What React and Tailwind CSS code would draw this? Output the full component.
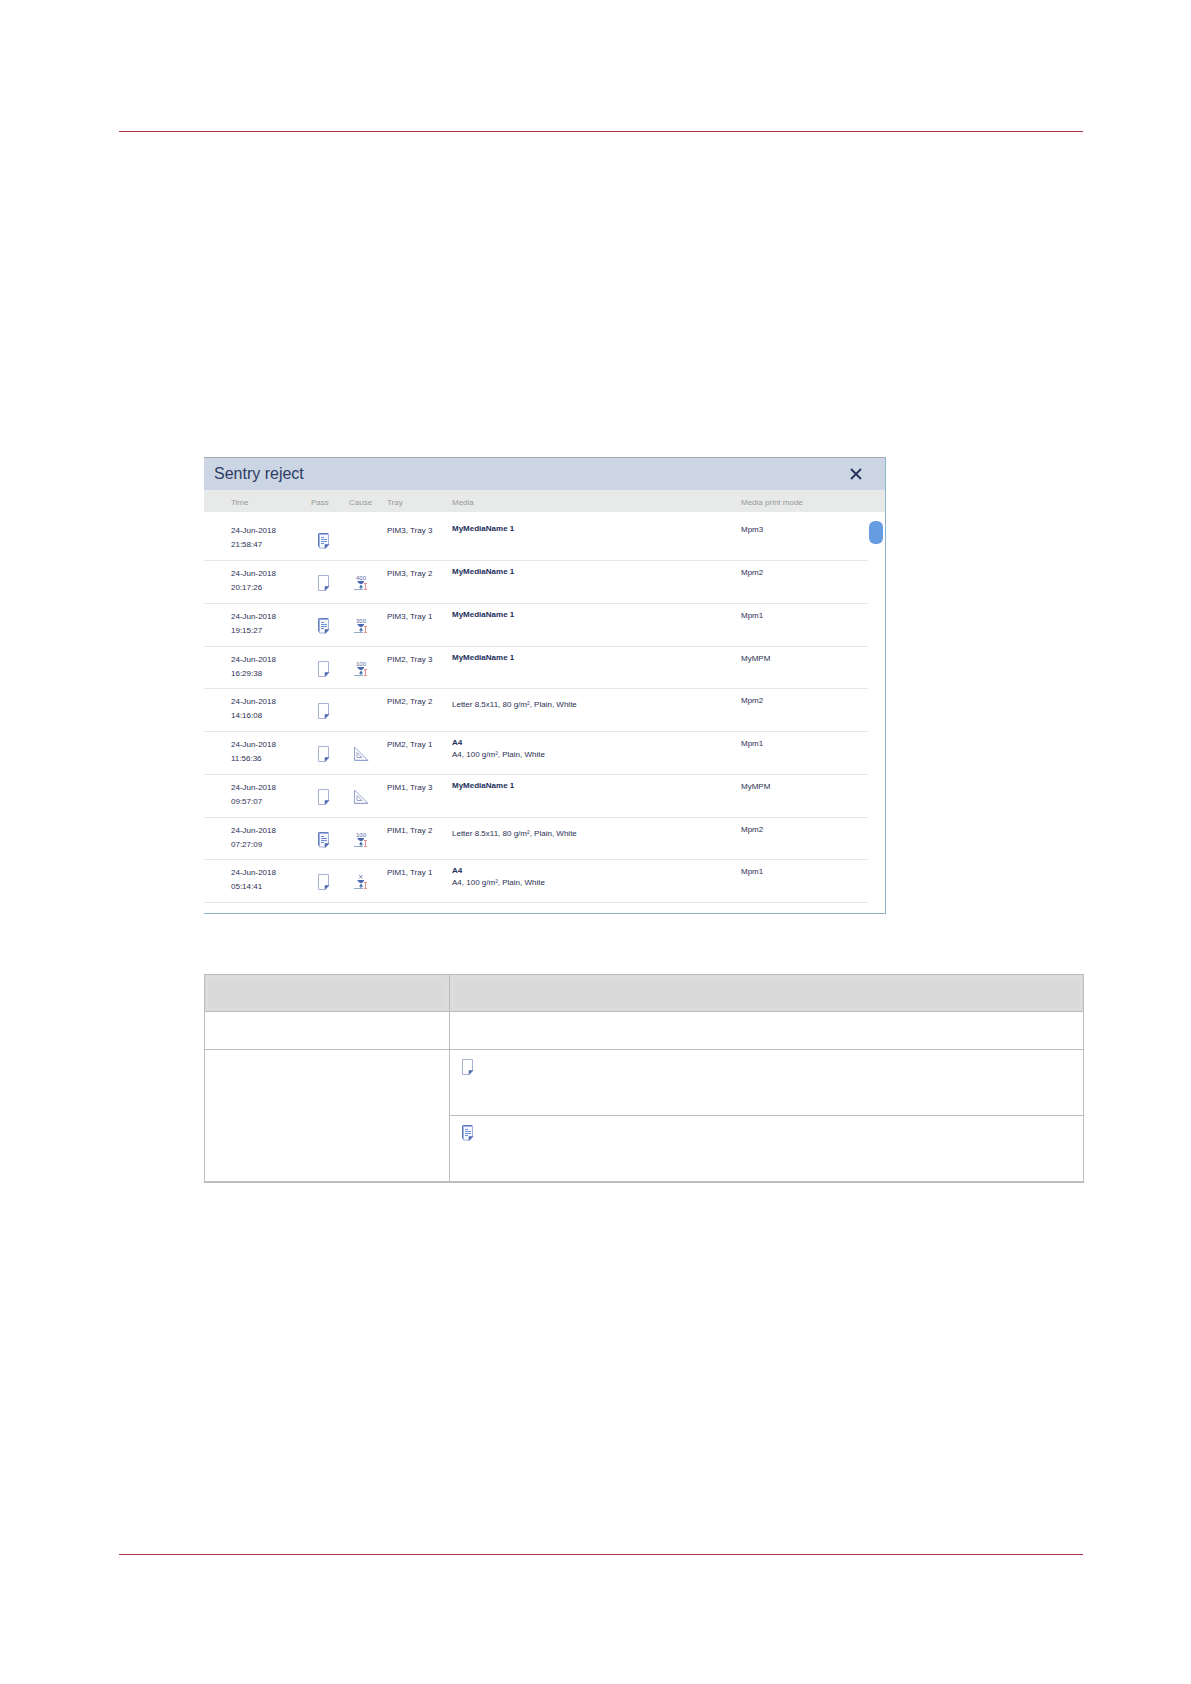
import React from "react";

function PageIcon({ lined = false }) {
  return (
    <svg viewBox="0 0 12 16" width="12" height="16" className="block" aria-hidden="true">
      {lined ? (
        <>
          <path d="M1.5 1.5H10.5V11.5L7.5 15H1.5Z" fill="#f6f8fe" stroke="#a3b2dc" />
          <path d="M0.5 13.5V1Q0.5 0.5 1 0.5H10.5" fill="none" stroke="#5f7bbd" />
          <path d="M3 4.5H6M3 6.5H9M3 8.5H9M3 10.5H6" stroke="#7391d6" />
        </>
      ) : (
        <path d="M0.5 0.5H10.5V11.5L7 15.5H0.5Z" fill="#fff" stroke="#a9b2d2" />
      )}
      <path d="M7 15.5V11.5H11Z" fill="#4c69b0" stroke="#4c69b0" strokeWidth="0.5" />
    </svg>
  );
}

function ThicknessIcon({ label }) {
  return (
    <svg viewBox="0 0 14 16" width="14" height="16" className="block overflow-visible" aria-hidden="true">
      {label ? (
        <text x="7" y="5" textAnchor="middle" fontSize="6" fill="#5568a8" fontFamily="Liberation Sans, sans-serif">
          {label}
        </text>
      ) : (
        <path d="M5 1L8.5 4.5M8.5 1L5 4.5" stroke="#5568a8" strokeWidth="0.8" />
      )}
      <path d="M3.5 6H10V7L8 9H6L3.5 7Z" fill="#4a67b4" />
      <path d="M7 9.5L9 12.5H7.5V14H6.5V12.5H5Z" fill="#3c6aa8" />
      <path d="M0 14.5H9" stroke="#94a9c9" />
      <path d="M10 8.5H13M11.5 8.5V14.5M10 14.5H13" stroke="#ec8f8f" fill="none" />
    </svg>
  );
}

function TriangleIcon() {
  return (
    <svg viewBox="0 0 15 16" width="15" height="16" className="block" aria-hidden="true">
      <path d="M0.5 1V14.5H14Z" fill="none" stroke="#94a3cf" />
      <path d="M3 6.5V11.5H8Z" fill="none" stroke="#94a3cf" />
      <path d="M1 14H14" stroke="#94a3cf" strokeDasharray="1 1" />
    </svg>
  );
}

const rows = [
  { time: "21:58:47", lined: true, tray: "PIM3, Tray 3", name: "MyMediaName 1", mode: "Mpm3" },
  { time: "20:17:26", cause: "thickness", label: "400", tray: "PIM3, Tray 2", name: "MyMediaName 1", mode: "Mpm2" },
  { time: "19:15:27", lined: true, cause: "thickness", label: "300", tray: "PIM3, Tray 1", name: "MyMediaName 1", mode: "Mpm1" },
  { time: "16:29:38", cause: "thickness", label: "100", tray: "PIM2, Tray 3", name: "MyMediaName 1", mode: "MyMPM", short: true },
  { time: "14:16:08", tray: "PIM2, Tray 2", detail: "Letter 8.5x11, 80 g/m², Plain, White", mode: "Mpm2" },
  { time: "11:56:36", cause: "size", tray: "PIM2, Tray 1", name: "A4", detail: "A4, 100 g/m², Plain, White", mode: "Mpm1" },
  { time: "09:57:07", cause: "size", tray: "PIM1, Tray 3", name: "MyMediaName 1", mode: "MyMPM" },
  { time: "07:27:09", lined: true, cause: "thickness", label: "100", tray: "PIM1, Tray 2", detail: "Letter 8.5x11, 80 g/m², Plain, White", mode: "Mpm2", short: true },
  { time: "05:14:41", cause: "thickness", tray: "PIM1, Tray 1", name: "A4", detail: "A4, 100 g/m², Plain, White", mode: "Mpm1" },
];

function RejectRow({ row, first }) {
  const height = first ? "h-[49px]" : row.short ? "h-[42px]" : "h-[43px]";
  const top = first ? "pt-3" : "pt-[6px]";
  const modeTop = first ? "pt-[11px]" : "pt-[5px]";
  const mediaTop = first ? "pt-[11px]" : row.name ? "pt-[5px]" : "pt-[10px]";
  const iconTop = first ? "pt-[21px]" : "pt-[14px]";
  const line = "border-b border-[#e6e6e8] p-0 align-top";
  return (
    <tr className={height}>
      <td className={`${line} ${top} pl-[27px]`}>
        24-Jun-2018
        <br />
        {row.time}
      </td>
      <td className={`${line} ${iconTop} pl-[7px]`}>
        <PageIcon lined={row.lined} />
      </td>
      <td className={`${line} ${iconTop} pl-[5px]`}>
        {row.cause === "size" && <TriangleIcon />}
        {row.cause === "thickness" && <ThicknessIcon label={row.label} />}
      </td>
      <td className={`${line} ${top}`}>{row.tray}</td>
      <td className={`${line} ${mediaTop} leading-3`}>
        {row.name && <div className="font-bold text-[#222e5a]">{row.name}</div>}
        {row.detail && <div>{row.detail}</div>}
      </td>
      <td className={`${line} ${modeTop}`}>{row.mode}</td>
      {first && (
        <td rowSpan={rows.length} className="p-0 pt-[9px] pl-px align-top">
          <div className="h-[23px] w-[14px] rounded-[6px] bg-[#669ce2]" />
        </td>
      )}
    </tr>
  );
}

function SentryRejectDialog() {
  return (
    <section aria-label="Sentry reject" className="max-w-[682px] border-t border-r border-b border-[#8fb3c8] border-t-[#a4aab2] pb-[10px]">
      <header className="flex h-8 items-center justify-between bg-[#ccd5e3] pr-[22px] pl-[10px]">
        <h1 className="text-base text-[#2c3c63]">Sentry reject</h1>
        <button type="button" aria-label="Close" className="text-[#27305c]">
          <svg viewBox="0 0 12 12" width="14" height="12" className="block">
            <path d="M1 1L11 11M11 1L1 11" stroke="currentColor" strokeWidth="1.8" fill="none" />
          </svg>
        </button>
      </header>
      <table className="w-full table-fixed border-separate border-spacing-0 text-left text-[8px] leading-[14px] text-[#2c3052]">
        <colgroup>
          <col className="w-[107px]" />
          <col className="w-[38px]" />
          <col className="w-[38px]" />
          <col className="w-[65px]" />
          <col />
          <col className="w-[127px]" />
          <col className="w-[17px]" />
        </colgroup>
        <thead>
          <tr className="h-[22px] bg-[#e8eae9] text-[#98999b]">
            <th className="p-0 pt-[3px] pl-[27px] font-normal">Time</th>
            <th className="p-0 pt-[3px] font-normal">Pass</th>
            <th className="p-0 pt-[3px] font-normal">Cause</th>
            <th className="p-0 pt-[3px] font-normal">Tray</th>
            <th className="p-0 pt-[3px] font-normal">Media</th>
            <th className="p-0 pt-[3px] font-normal">Media print mode</th>
            <td className="p-0" />
          </tr>
        </thead>
        <tbody>
          {rows.map((row, i) => (
            <RejectRow key={row.time} row={row} first={i === 0} />
          ))}
        </tbody>
      </table>
    </section>
  );
}

function LegendTable() {
  const cell = "border-t border-l border-[#bdbdbd] p-0 align-top";
  return (
    <table className="w-full table-fixed border-separate border-spacing-0 border-r border-b-2 border-[#bdbdbd]">
      <colgroup>
        <col className="w-[245px]" />
        <col />
      </colgroup>
      <thead>
        <tr className="h-[37px] bg-[#dadada]">
          <td className={`${cell} shadow-[inset_0_0_0_2px_#dadada,inset_0_0_0_3px_#dfdfdf]`} />
          <td className={`${cell} shadow-[inset_0_0_0_2px_#dadada,inset_0_0_0_3px_#dfdfdf]`} />
        </tr>
      </thead>
      <tbody>
        <tr className="h-[38px]">
          <td className={cell} />
          <td className={cell} />
        </tr>
        <tr className="h-[66px]">
          <td rowSpan={2} className={cell} />
          <td className={`${cell} pt-[9px] pl-3`}>
            <PageIcon />
          </td>
        </tr>
        <tr className="h-[66px]">
          <td className={`${cell} pt-[9px] pl-3`}>
            <PageIcon lined />
          </td>
        </tr>
      </tbody>
    </table>
  );
}

export default function App() {
  return (
    <main className="flex min-h-screen flex-col bg-white pt-[131px] pr-[108px] pb-[129px] pl-[119px] font-['Liberation_Sans',Arial,sans-serif]">
      <hr className="border-t border-[#a93643]" />
      <div className="flex-1 pt-[325px] pl-[85px]">
        <SentryRejectDialog />
        <div className="-mr-px pt-[60px]">
          <LegendTable />
        </div>
      </div>
      <hr className="border-t border-[#a93643]" />
    </main>
  );
}
